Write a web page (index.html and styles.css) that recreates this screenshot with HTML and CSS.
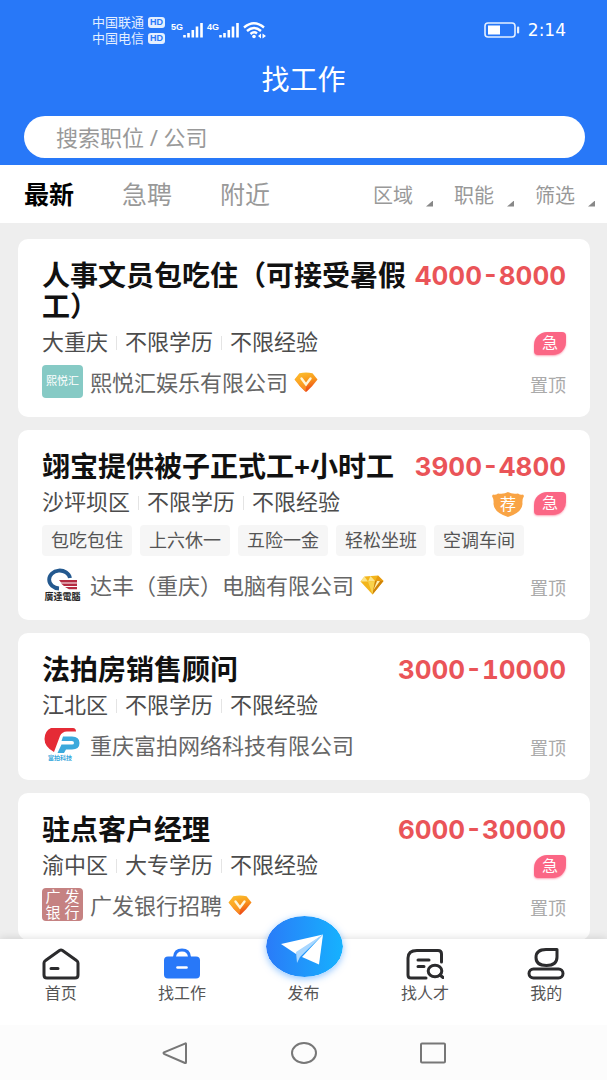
FILE: index.html
```html
<!DOCTYPE html>
<html lang="zh-CN">
<head>
<meta charset="utf-8">
<meta name="viewport" content="width=device-width, initial-scale=1">
<title>找工作</title>
<link rel="stylesheet" href="styles.css">
</head>
<body>
<svg width="0" height="0" class="defs" aria-hidden="true">
  <defs>
    <linearGradient id="gold" x1="0" y1="0" x2="0.3" y2="1">
      <stop offset="0" stop-color="#fbc531"/><stop offset="0.5" stop-color="#f99a1c"/><stop offset="1" stop-color="#ee4d16"/>
    </linearGradient>
    <linearGradient id="sky" x1="0" y1="0" x2="1" y2="0">
      <stop offset="0" stop-color="#2a7bf8"/><stop offset="1" stop-color="#16b2fe"/>
    </linearGradient>
    <symbol id="vip" viewBox="0 0 24 20">
      <path d="M5.500 1.200Q12 -.4 18.500 1.200L23.500 7.500Q18 15 12.800 19.600Q12 20 11.200 19.600Q6 15 .5 7.500Z" fill="url(#gold)"/>
      <path d="M1 7.500L5.500 1.200L8 6L12 15L11.500 19.500Q6 15 1 7.500Z" fill="#ffb52b" opacity=".55"/>
      <path d="M7.500 6.500L12 12.500L16.500 6.500" fill="none" stroke="#fff6d8" stroke-width="2.400" stroke-linecap="round"/>
    </symbol>
    <symbol id="gem" viewBox="0 0 24 20">
      <path d="M4.500 1.500L18 .5L23.500 6L12.500 19.500L.5 6.500Z" fill="#f3b51b"/>
      <path d="M4.500 1.500L8 6.500L.5 6.500ZM10.500 1L15 6L8 6.500Z" fill="#fbe48a"/>
      <path d="M18 .5L23.500 6H15Z" fill="#e79a10"/>
      <path d="M8 6.500L15 6L12.500 19.500Z" fill="#f9d24c"/>
      <path d="M15 6L23.500 6L12.500 19.500Z" fill="#cf8208"/>
      <path d="M17 6L20 6L13.500 15Z" fill="#fff1b0"/>
    </symbol>
    <symbol id="signal" viewBox="0 0 20 16">
      <path d="M1.500 15.500V13M5.500 15.500V11M9.800 15.500V8M14 15.500V4.500M18.500 15.500V1" fill="none" stroke="#fff" stroke-width="2.600"/>
    </symbol>
  </defs>
</svg>

<div class="app">
  <header class="top">
    <div class="status">
      <div class="carriers">
        <div class="carrier">中国联通<span class="hd">HD</span></div>
        <div class="carrier">中国电信<span class="hd">HD</span></div>
      </div>
      <div class="radios">
        <div class="radio"><span class="gen">5G</span><svg class="bars" aria-hidden="true"><use href="#signal"/></svg></div>
        <div class="radio"><span class="gen">4G</span><svg class="bars" aria-hidden="true"><use href="#signal"/></svg></div>
        <svg class="wifi" viewBox="0 0 23 17" fill="none" stroke="#fff" stroke-width="2.400" aria-hidden="true">
          <path d="M1 5.500Q11 -3 21 5.500M4 9Q11 3 18 9M7.500 12Q11 9 14 11.500"/>
          <circle cx="11" cy="14.500" r="1.800" fill="#fff" stroke="none"/>
          <path d="M15 14L18 11.500V16.500ZM23 14L19.500 11.500V16.500Z" fill="#fff" stroke="none"/>
        </svg>
      </div>
      <div class="clock">
        <svg class="battery" viewBox="0 0 36 16" aria-hidden="true">
          <rect x="1" y="1" width="30" height="14" rx="3" fill="none" stroke="#e4efff" stroke-width="1.600"/>
          <rect x="4" y="3.500" width="12" height="9" fill="#fff"/>
          <rect x="33" y="4.500" width="2.200" height="7" rx="1" fill="#e4efff"/>
        </svg>
        <span>2:14</span>
      </div>
    </div>
    <h1 class="page-title">找工作</h1>
    <form class="search">
      <input class="search-input" type="search" aria-label="搜索职位或公司" placeholder="搜索职位 / 公司">
    </form>
  </header>

  <div class="toolbar">
    <div class="tabs">
      <button class="tab active" type="button">最新</button>
      <button class="tab" type="button">急聘</button>
      <button class="tab" type="button">附近</button>
    </div>
    <div class="filters">
      <button class="filter" type="button" aria-haspopup="listbox">区域</button>
      <button class="filter" type="button" aria-haspopup="listbox">职能</button>
      <button class="filter" type="button" aria-haspopup="listbox">筛选</button>
    </div>
  </div>

  <main class="list">
    <article class="card">
      <div class="head"><h2 class="job">人事文员包吃住（可接受暑假工）</h2><span class="pay">4000-8000</span></div>
      <div class="meta"><span>大重庆</span><span>不限学历</span><span>不限经验</span>
        <div class="badges"><b class="badge urgent">急</b></div></div>
      <div class="company">
        <div class="logo teal">熙悦汇</div>
        <span class="name">熙悦汇娱乐有限公司</span><svg class="level" aria-hidden="true"><use href="#vip"/></svg>
        <span class="pinned">置顶</span>
      </div>
    </article>

    <article class="card">
      <div class="head"><h2 class="job">翊宝提供被子正式工+小时工</h2><span class="pay">3900-4800</span></div>
      <div class="meta"><span>沙坪坝区</span><span>不限学历</span><span>不限经验</span>
        <div class="badges">
          <b class="badge pick"><svg class="shield" viewBox="0 0 32 25" aria-hidden="true"><path d="M1 2.500Q3.500 3.500 6 1.500Q12 2.500 16 0Q20 2.500 26 1.500Q28.500 3.500 31 2.500L32 4Q30 7 30.500 12Q30 20.500 16 25Q2 20.500 1.500 12Q2 7 0 4Z" fill="#f9a445"/></svg><span>荐</span></b>
          <b class="badge urgent">急</b>
        </div></div>
      <ul class="tags"><li>包吃包住</li><li>上六休一</li><li>五险一金</li><li>轻松坐班</li><li>空调车间</li></ul>
      <div class="company">
        <svg class="logo" viewBox="0 0 41 33" role="img" aria-label="廣達電腦">
          <path d="M17 20.500A10.500 9 0 1 1 28 10" fill="none" stroke="#24598f" stroke-width="3.800"/>
          <path d="M17 12H35V14.500H19ZM19 15.500H35V18H22ZM23 19H35V21.300H27Z" fill="#b52c42"/>
          <text x="20.500" y="31.500" text-anchor="middle" class="logo-text dark">廣達電腦</text>
        </svg>
        <span class="name">达丰（重庆）电脑有限公司</span><svg class="level" aria-hidden="true"><use href="#gem"/></svg>
        <span class="pinned">置顶</span>
      </div>
    </article>

    <article class="card">
      <div class="head"><h2 class="job">法拍房销售顾问</h2><span class="pay">3000-10000</span></div>
      <div class="meta"><span>江北区</span><span>不限学历</span><span>不限经验</span></div>
      <div class="company">
        <svg class="logo" viewBox="0 0 41 33" role="img" aria-label="富拍科技">
          <path d="M9 0H31Q34 0 34 3.500H25Q20 3.500 18 8L12 24Q2.500 19 2.500 11Q2.500 3 9 0Z" fill="#e52b36"/>
          <path d="M21 8.500H30Q37.500 8.500 37.500 15Q37.500 21.500 30 21.500H24L22 25H15.500L19.500 16.500H30Q32 16.500 32 15Q32 13 30 13H19.500Z" fill="#3ba9dc"/>
          <text x="18" y="32" text-anchor="middle" class="logo-text blue">富拍科技</text>
        </svg>
        <span class="name">重庆富拍网络科技有限公司</span>
        <span class="pinned">置顶</span>
      </div>
    </article>

    <article class="card">
      <div class="head"><h2 class="job">驻点客户经理</h2><span class="pay">6000-30000</span></div>
      <div class="meta"><span>渝中区</span><span>大专学历</span><span>不限经验</span>
        <div class="badges"><b class="badge urgent">急</b></div></div>
      <div class="company">
        <div class="logo rose">广 发<br>银 行</div>
        <span class="name">广发银行招聘</span><svg class="level" aria-hidden="true"><use href="#vip"/></svg>
        <span class="pinned">置顶</span>
      </div>
    </article>
  </main>

  <nav class="nav">
    <a class="nav-item" href="#home">
      <svg class="nav-icon" viewBox="0 0 38 32" fill="none" stroke="#2b2b2d" stroke-width="3" stroke-linejoin="round" stroke-linecap="round" aria-hidden="true">
        <path d="M2 15Q2 13.500 3.500 12.500L17.500 2.500Q19 1.500 20.500 2.500L34.500 12.500Q36 13.500 36 15V27Q36 30 33 30H5Q2 30 2 27ZM9 20.500H16"/>
      </svg>首页</a>
    <a class="nav-item" href="#jobs">
      <svg class="nav-icon" viewBox="0 0 38 32" fill="none" aria-hidden="true">
        <path d="M11.500 9Q12 2 19 2T26.500 9" stroke="#2878f8" stroke-width="3"/>
        <rect x="1" y="8.500" width="36" height="22" rx="4" fill="#2878f8"/>
        <path d="M14.500 19.500H23.500" stroke="#fff" stroke-width="2.600" stroke-linecap="round"/>
      </svg>找工作</a>
    <a class="nav-item" href="#post">
      <svg class="send" viewBox="0 0 77 61" aria-hidden="true">
        <ellipse cx="38.500" cy="30.500" rx="38.500" ry="30.500" fill="url(#sky)"/>
        <path d="M15 28L57 18.500L30 38Z" fill="#fff"/>
        <path d="M30 36L57 18.500L34 41L31 47Z" fill="#a9d7ff"/>
        <path d="M57 18.500L53 48.500L36 41Z" fill="#fff"/>
      </svg>发布</a>
    <a class="nav-item" href="#talent">
      <svg class="nav-icon" viewBox="0 0 38 32" fill="none" stroke="#2b2b2d" stroke-width="3" stroke-linecap="round" aria-hidden="true">
        <path d="M20 30H5Q2 30 2 27V10Q2 2.500 11 2.500H32Q35.500 2.500 35.500 6V14M12 12H23M12 18.500H18"/>
        <ellipse cx="29" cy="23" rx="6.800" ry="5.800"/>
        <path d="M34 27L37 29.500"/>
      </svg>找人才</a>
    <a class="nav-item" href="#me">
      <svg class="nav-icon" viewBox="0 0 38 32" fill="none" stroke="#2b2b2d" stroke-width="3" stroke-linejoin="round" aria-hidden="true">
        <path d="M19 1.500H30V9Q30 17.500 19.500 17.500Q9 17.500 9 9.500Q9 1.500 19 1.500Z"/>
        <rect x="2" y="21" width="34" height="9" rx="4.500"/>
      </svg>我的</a>
  </nav>

  <div class="system">
    <button class="sys" type="button" aria-label="返回"><svg class="sys-icon" viewBox="0 0 26 22"><path d="M23.500 1.500Q24 1 24 2V20Q24 21.500 23 21L2 11.800Q1 11 2 10.300Z"/></svg></button>
    <button class="sys" type="button" aria-label="主屏幕"><svg class="sys-icon" viewBox="0 0 26 22"><ellipse cx="13" cy="11" rx="12" ry="10"/></svg></button>
    <button class="sys" type="button" aria-label="最近任务"><svg class="sys-icon" viewBox="0 0 26 22"><rect x="1" y="1.500" width="24" height="19" rx="1"/></svg></button>
  </div>
</div>
</body>
</html>
```
FILE: styles.css
```css
* { box-sizing: border-box; }

body {
  margin: 0;
  font-family: "Noto Sans", "Noto Sans CJK SC", sans-serif;
  color: #111;
  background: #eee;
}

h1, h2, ul { margin: 0; padding: 0; }
button { border: 0; padding: 0; background: none; font-family: inherit; }
.defs { position: absolute; }

.app { display: flex; flex-direction: column; height: 100vh; }

/* header */
.top {
  flex: none;
  padding-bottom: 7px;
  background: #2878f8;
  color: #fff;
}
.status {
  display: flex;
  align-items: center;
  height: 60px;
  padding: 0 41px 0 92px;
}
.carrier {
  display: flex;
  align-items: center;
  gap: 4px;
  font-size: 13px;
  line-height: 16px;
  color: #e4efff;
}
.hd {
  padding: 0 2px;
  border-radius: 3px;
  background: #e4efff;
  color: #2878f8;
  font: 700 9px/11px "Liberation Sans", sans-serif;
}
.radios { display: flex; gap: 4px; margin-left: 6px; }
.radio { display: flex; }
.gen { font: 700 9px/10px "Liberation Sans", sans-serif; }
.bars { width: 20px; height: 16px; }
.wifi { width: 23px; height: 17px; }
.clock {
  display: flex;
  align-items: center;
  gap: 8px;
  margin-left: auto;
  font: 17px/20px "DejaVu Sans", sans-serif;
}
.battery { width: 36px; height: 16px; }

.page-title {
  font-size: 28px;
  font-weight: 400;
  line-height: 38px;
  text-align: center;
}
.search { padding: 18px 22px 0 24px; }
.search-input {
  display: block;
  width: 100%;
  height: 42px;
  padding: 0 32px;
  border: 0;
  border-radius: 21px;
  background: #fff;
  font: inherit;
  font-size: 22px;
  color: #333;
  outline: none;
}
.search-input::placeholder { color: #999; }

/* tabs and filters */
.toolbar {
  flex: none;
  display: flex;
  justify-content: space-between;
  align-items: center;
  height: 58px;
  padding: 0 12px 0 24px;
  background: #fff;
}
.tabs { display: flex; gap: 48px; }
.tab { font-size: 25px; line-height: 36px; color: #999; }
.active { color: #000; font-weight: 700; }
.filters { display: flex; gap: 21px; padding-top: 3px; }
.filter {
  display: flex;
  align-items: flex-end;
  gap: 13px;
  font-size: 20px;
  line-height: 28px;
  color: #999;
}
.filter::after {
  content: "";
  width: 7px;
  height: 6px;
  margin-bottom: 3px;
  background: #888;
  clip-path: polygon(100% 0, 100% 100%, 0 100%);
}

/* job list */
.list {
  flex: 1;
  min-height: 0;
  display: flex;
  flex-direction: column;
  gap: 13px;
  padding: 16px 17px 0 18px;
  overflow-y: auto;
  scrollbar-width: none;
}
.card {
  flex: none;
  padding: 21px 24px 19px;
  border-radius: 10px;
  background: #fff;
}
.head { display: flex; justify-content: space-between; }
.job { flex: 1; font-size: 28px; font-weight: 700; line-height: 31px; }
.pay {
  font-family: Inter, sans-serif;
  font-size: 26px;
  font-weight: 700;
  font-variant-numeric: tabular-nums;
  line-height: 31px;
  color: #ea5458;
}
.meta {
  display: flex;
  align-items: center;
  height: 31px;
  margin-top: 4px;
  font-size: 22px;
  line-height: 31px;
  color: #4c4c4c;
}
.meta > span + span::before {
  content: "";
  display: inline-block;
  width: 1px;
  height: 14px;
  margin: 0 8px;
  background: #e4e4e4;
}
.badges { display: flex; gap: 10px; margin-left: auto; padding-top: 3px; }
.badge {
  display: grid;
  place-items: center;
  width: 32px;
  height: 23px;
  font-size: 16px;
  font-weight: 400;
  line-height: 23px;
  color: #fff;
}
.urgent {
  border-radius: 13px 4px;
  background: #fb6685;
  box-shadow: 0 1px 2px #fb668599;
}
.pick > * { grid-area: 1 / 1; }
.shield { width: 32px; height: 25px; }

.tags {
  display: flex;
  gap: 8px;
  margin-top: 8px;
  list-style: none;
}
.tags li {
  padding: 0 9px;
  border-radius: 4px;
  background: #f6f6f6;
  font-size: 18px;
  line-height: 31px;
  color: #555;
}
.tags + .company { margin-top: 12px; }

.company {
  display: flex;
  align-items: center;
  height: 33px;
  margin-top: 8px;
}
.logo { flex: none; width: 41px; height: 33px; border-radius: 4px; }
.teal {
  background: #86cac5;
  color: #fff;
  font-size: 11px;
  line-height: 31px;
  text-align: center;
}
.rose {
  background: #c58282;
  color: #fff;
  font-size: 15px;
  line-height: 16px;
  text-align: center;
}
.logo-text { font-size: 9px; font-weight: 700; }
.dark { fill: #222; }
.blue { fill: #3ba9dc; font-size: 6px; }
.name {
  margin-left: 7px;
  font-size: 22px;
  line-height: 32px;
  color: #666;
}
.level { width: 24px; height: 20px; margin-left: 6px; }
.pinned {
  margin-left: auto;
  padding-top: 6px;
  font-size: 18px;
  line-height: 26px;
  color: #aaa;
}

/* bottom navigation */
.nav {
  position: relative;
  flex: none;
  display: flex;
  height: 86px;
  padding-top: 9px;
  background: #fff;
  box-shadow: 0 -1px 8px #0000001f;
}
.nav-item {
  position: relative;
  flex: 1;
  display: flex;
  flex-direction: column;
  align-items: center;
  font-size: 16px;
  line-height: 24px;
  color: #555;
  text-decoration: none;
}
.nav-item:has(.send) { padding-top: 33px; }
.nav-icon { width: 38px; height: 32px; margin-bottom: 1px; }
.send {
  position: absolute;
  top: -32px;
  left: 50%;
  width: 77px;
  height: 61px;
  margin-left: -38px;
  border-radius: 50%;
  box-shadow: 0 2px 7px #2a90ff80;
}

/* system keys */
.system {
  position: relative;
  flex: none;
  display: flex;
  justify-content: center;
  gap: 103px;
  height: 55px;
  background: #fcfcfc;
}
.sys { display: grid; place-items: center; }
.sys-icon { width: 26px; height: 22px; fill: none; stroke: #777; stroke-width: 2; }
```
